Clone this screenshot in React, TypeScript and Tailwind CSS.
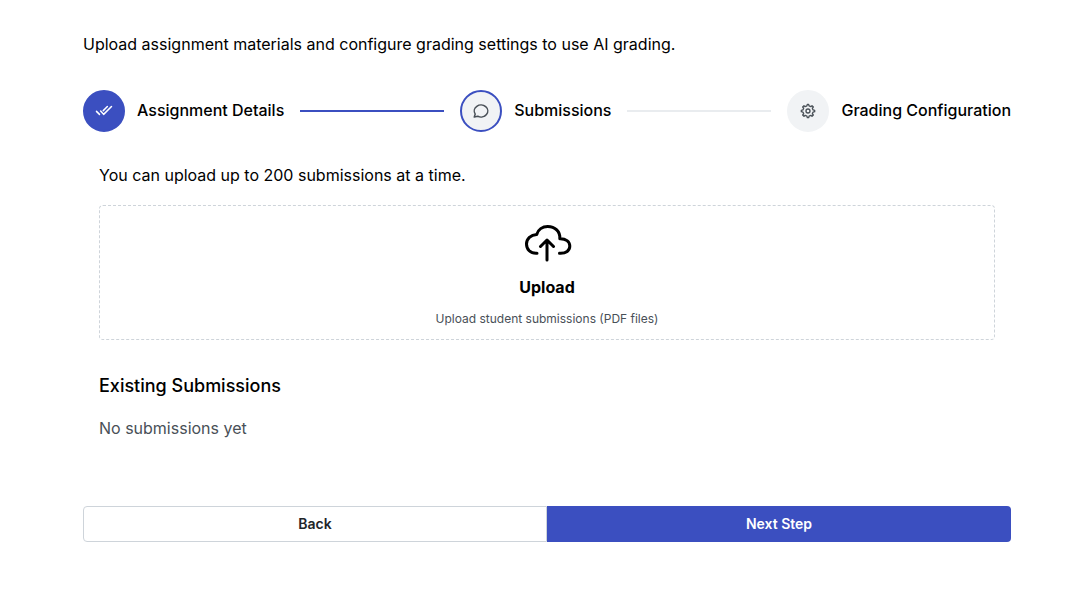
import { ReactNode } from "react";

function Step({ label, className, children }: { label: string; className: string; children: ReactNode }) {
  return (
    <li className="flex shrink-0 items-center gap-3">
      <span className={"flex size-[42px] items-center justify-center rounded-full border-2 " + className}>{children}</span>
      <span className="pb-0.5 text-base font-medium">{label}</span>
    </li>
  );
}

const stroke = {
  fill: "none",
  stroke: "currentColor",
  strokeLinecap: "round",
  strokeLinejoin: "round",
} as const;

export default function App() {
  return (
    <main className="min-h-screen bg-white px-[83px] pt-8 pr-[79px] font-[Inter,sans-serif] text-base text-black">
      <p>Upload assignment materials and configure grading settings to use AI grading.</p>

      <ol className="mt-[34px] flex items-center gap-4">
        <Step label="Assignment Details" className="border-[#3b4fc0] bg-[#3b4fc0] text-white">
          <svg viewBox="0 0 24 24" className="size-[18px]" strokeWidth="2" {...stroke}>
            <path d="M2 12.5 6 16.5M7.5 12 11.5 16.5 22 6M16.5 6 11 11.5" />
          </svg>
        </Step>
        <li aria-hidden="true" className="h-0.5 flex-1 bg-[#3b4fc0]" />
        <Step label="Submissions" className="border-[#3b4fc0] bg-[#f1f3f5] text-[#495057]">
          <svg viewBox="0 0 24 24" className="size-[18px]" strokeWidth="2" {...stroke}>
            <path d="M3 20l1.3-3.9C1.976 12.663 2.874 8.228 6.4 5.726c3.526-2.501 8.59-2.296 11.845.48 3.255 2.777 3.695 7.266 1.029 10.501C16.608 19.942 11.659 20.922 7.7 19L3 20" />
          </svg>
        </Step>
        <li aria-hidden="true" className="h-0.5 flex-1 bg-[#e9ecef]" />
        <Step label="Grading Configuration" className="border-[#f1f3f5] bg-[#f1f3f5] text-[#495057]">
          <svg viewBox="0 0 24 24" className="size-4" strokeWidth="2" {...stroke}>
            <circle cx="12" cy="12" r="3" />
            <path d="M19.622 10.395 18.525 7.745 20 6 18 4 16.265 5.483 13.558 4.37 12.935 2H10.981L10.349 4.401 7.703 5.516 6 4 4 6 5.453 7.789 4.371 10.446 2 11V13L4.401 13.656 5.516 16.3 4 18 6 20 7.791 18.54 10.397 19.612 11 22H13L13.604 19.613 16.255 18.515 18 20 20 18 18.52 16.239 19.618 13.588 22 12.971V11Z" />
          </svg>
        </Step>
      </ol>

      <section className="px-4 pt-[31px]">
        <p>You can upload up to 200 submissions at a time.</p>
        <button type="button" className="mt-[18px] flex w-full flex-col items-center rounded border border-dashed border-[#ced4da] px-4 pt-3 pb-3">
          <svg viewBox="0 0 50 50" className="size-[50px]" strokeWidth="3" {...stroke}>
            <path d="M25 42V22M18.5 28.5 25 22 31.5 28.5" />
            <path d="M15 35.3H14C8.5 35.3 4.5 31.5 4.5 26 4.5 20.6 8.8 16.7 14.7 16.5 16 11.7 20.5 8.5 25.7 8.5 33 8.5 38.4 13.6 37.8 20.7 43.8 20.5 47.8 23.5 47.8 28 47.8 32.5 44.2 35.7 37.5 35.3" />
          </svg>
          <span className="mt-[7px] text-base font-bold">Upload</span>
          <span className="mt-3 text-xs text-[#495057]">Upload student submissions (PDF files)</span>
        </button>
        <h2 className="mt-8 text-lg font-medium">Existing Submissions</h2>
        <p className="mt-4 text-[#495057]">No submissions yet</p>
      </section>

      <div className="mt-[66px] flex">
        <button type="button" className="h-9 w-1/2 rounded-l border border-[#ced4da] text-sm font-semibold text-[#212529]">Back</button>
        <button type="button" className="h-9 w-1/2 rounded-r bg-[#3b4fc0] text-sm font-semibold text-white">Next Step</button>
      </div>
    </main>
  );
}
